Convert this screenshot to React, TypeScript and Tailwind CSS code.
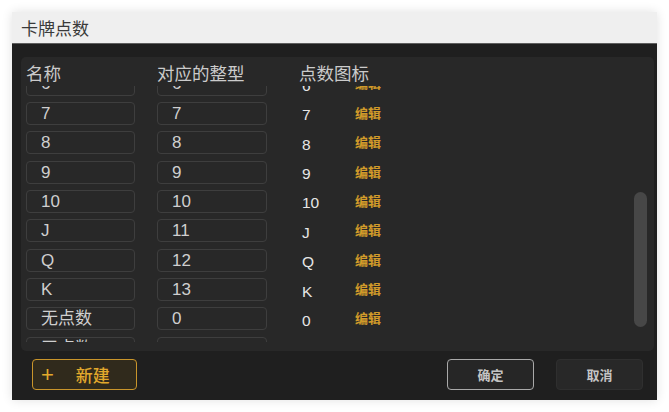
import React from "react"

const rows = [
  { name: "A", value: "1", icon: "A" },
  { name: "2", value: "2", icon: "2" },
  { name: "3", value: "3", icon: "3" },
  { name: "4", value: "4", icon: "4" },
  { name: "5", value: "5", icon: "5" },
  { name: "6", value: "6", icon: "6" },
  { name: "7", value: "7", icon: "7" },
  { name: "8", value: "8", icon: "8" },
  { name: "9", value: "9", icon: "9" },
  { name: "10", value: "10", icon: "10" },
  { name: "J", value: "11", icon: "J" },
  { name: "Q", value: "12", icon: "Q" },
  { name: "K", value: "13", icon: "K" },
  { name: "无点数", value: "0", icon: "0" },
  { name: "王点数", value: "14", icon: "" },
]

function PointRow({ name, value, icon }: { name: string; value: string; icon: string }) {
  return (
    <div className="flex h-[29.35px] items-start">
      <div className="ml-[5px] flex h-[23px] w-[109px] items-center rounded-[4px] border border-[#3e3e3e] pl-[14px] text-[17px] text-[#cfcfcf]">
        {name}
      </div>
      <div className="ml-[22px] flex h-[23px] w-[110px] items-center rounded-[4px] border border-[#3e3e3e] pl-[14px] text-[17px] text-[#cfcfcf]">
        {value}
      </div>
      <div className="ml-[35px] flex h-[24px] w-[53px] items-center pt-[2px] text-[15.5px] text-[#e6e6e6]">
        {icon}
      </div>
      {icon && <div className="flex h-[23px] items-center text-[13px] font-bold text-[#d29b2a]">编辑</div>}
    </div>
  )
}

export default function App() {
  return (
    <div className="h-[412px] w-[669px] bg-white pt-[12px] pl-[12px] font-['Liberation_Sans','Noto_Sans_CJK_SC',sans-serif]">
      <div className="flex h-[388px] w-[645px] flex-col shadow-[0_0_10px_rgba(0,0,0,0.12)]">
        {/* Title bar */}
        <div className="flex h-[32px] items-center border-b border-[#5e5e5e] bg-[#efefef] pl-[9px] text-[17px] text-[#3a3a3a] font-['Noto_Sans_CJK_SC',sans-serif]">
          卡牌点数
        </div>

        {/* Body */}
        <div className="flex flex-1 flex-col bg-[#1f1f1f] pt-[13px] pr-[3px] pl-[9px]">
          <div className="flex h-[294px] flex-col rounded-[5px] bg-[#282828]">
            <div className="flex h-[29px] items-center pt-[4px] text-[17.5px] text-[#cbcbcb] font-['Noto_Sans_CJK_SC',sans-serif]">
              <span className="ml-[5px] w-[131px]">名称</span>
              <span className="w-[142px]">对应的整型</span>
              <span>点数图标</span>
            </div>
            <div className="relative h-[256px] overflow-hidden">
              <div className="mt-[-160px]">
                {rows.map((r) => (
                  <PointRow key={r.name} {...r} />
                ))}
              </div>
              {/* scrollbar */}
              <div className="absolute top-[106px] right-[7px] h-[135px] w-[13px] rounded-full bg-[#474747]" />
            </div>
          </div>

          {/* Footer */}
          <div className="flex items-center pt-[8px] pr-[11px] pl-[11px]">
            <button className="flex h-[31px] w-[105px] items-center rounded-[4px] border border-[#c9952b] bg-[#302a1c] pl-[8px] text-[17px] font-medium text-[#e2a92c]">
              <span className="text-[22px] font-normal leading-none">+</span>
              <span className="ml-[22px] font-['Noto_Sans_CJK_SC',sans-serif]">新建</span>
            </button>
            <div className="flex-1" />
            <button className="flex h-[31px] w-[87px] items-center justify-center rounded-[4px] border border-[#a9a9a9] bg-[#262626] text-[13px] font-bold text-[#c4c4c4] font-['Noto_Sans_CJK_SC',sans-serif]">
              确定
            </button>
            <button className="ml-[22px] flex h-[31px] w-[87px] items-center justify-center rounded-[4px] border border-[#2f2f2f] bg-[#282828] text-[13px] font-bold text-[#c4c4c4] font-['Noto_Sans_CJK_SC',sans-serif]">
              取消
            </button>
          </div>
        </div>
      </div>
    </div>
  )
}
